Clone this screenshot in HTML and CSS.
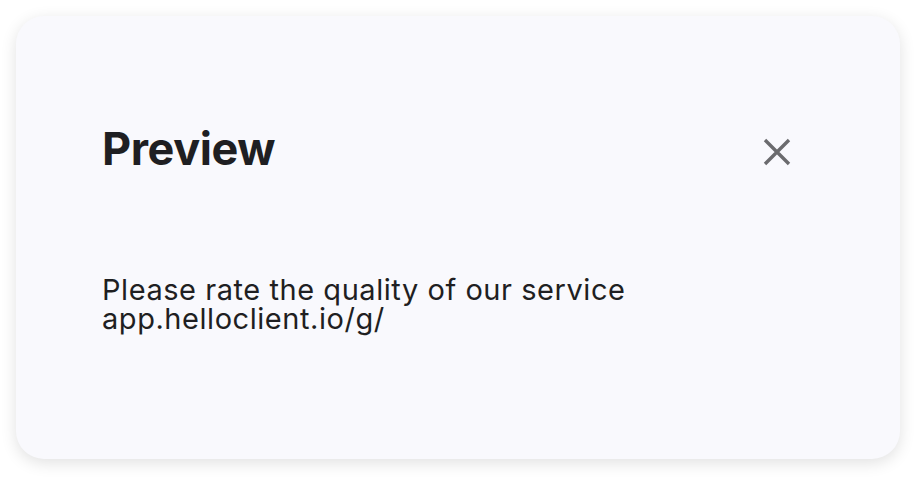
FILE: index.html
```html
<!DOCTYPE html>
<html>
<head>
<meta charset="utf-8">
<link rel="stylesheet" href="styles.css">
</head>
<body>
<div class="card">
  <div class="header">
    <h1 class="title">Preview</h1>
    <button class="close" aria-label="Close">
      <svg width="28" height="28" viewBox="0 0 28 28"><path d="M2 2 L26 26 M26 2 L2 26" stroke="#6b6b6e" stroke-width="3.4" fill="none"/></svg>
    </button>
  </div>
  <p class="body">Please rate the quality of our service<br>app.helloclient.io/g/</p>
</div>
</body>
</html>
```
FILE: styles.css
```css
html, body { margin: 0; padding: 0; background: #ffffff; }
body { width: 924px; height: 484px; padding: 16px; box-sizing: border-box; font-family: Inter, "Noto Sans", sans-serif; }
.card {
  width: 884px; height: 443px; box-sizing: border-box;
  background: #f9f9fd; border-radius: 28px;
  box-shadow: 0 4px 16px rgba(0,0,0,0.12);
  padding: 110px 86px 0 86px;
}
.header { display: flex; align-items: flex-start; justify-content: space-between; padding-right: 23px; }
.title { margin: 0; font-size: 45px; font-weight: 700; color: #1f1f22; line-height: 45px; letter-spacing: -0.4px; }
.close { border: 0; background: none; padding: 0; width: 28px; height: 28px; display: flex; margin-top: 12px; }
.body { margin: 104px 0 0 0; font-size: 29px; line-height: 29px; letter-spacing: 0.55px; color: #1f1f22; }
```
